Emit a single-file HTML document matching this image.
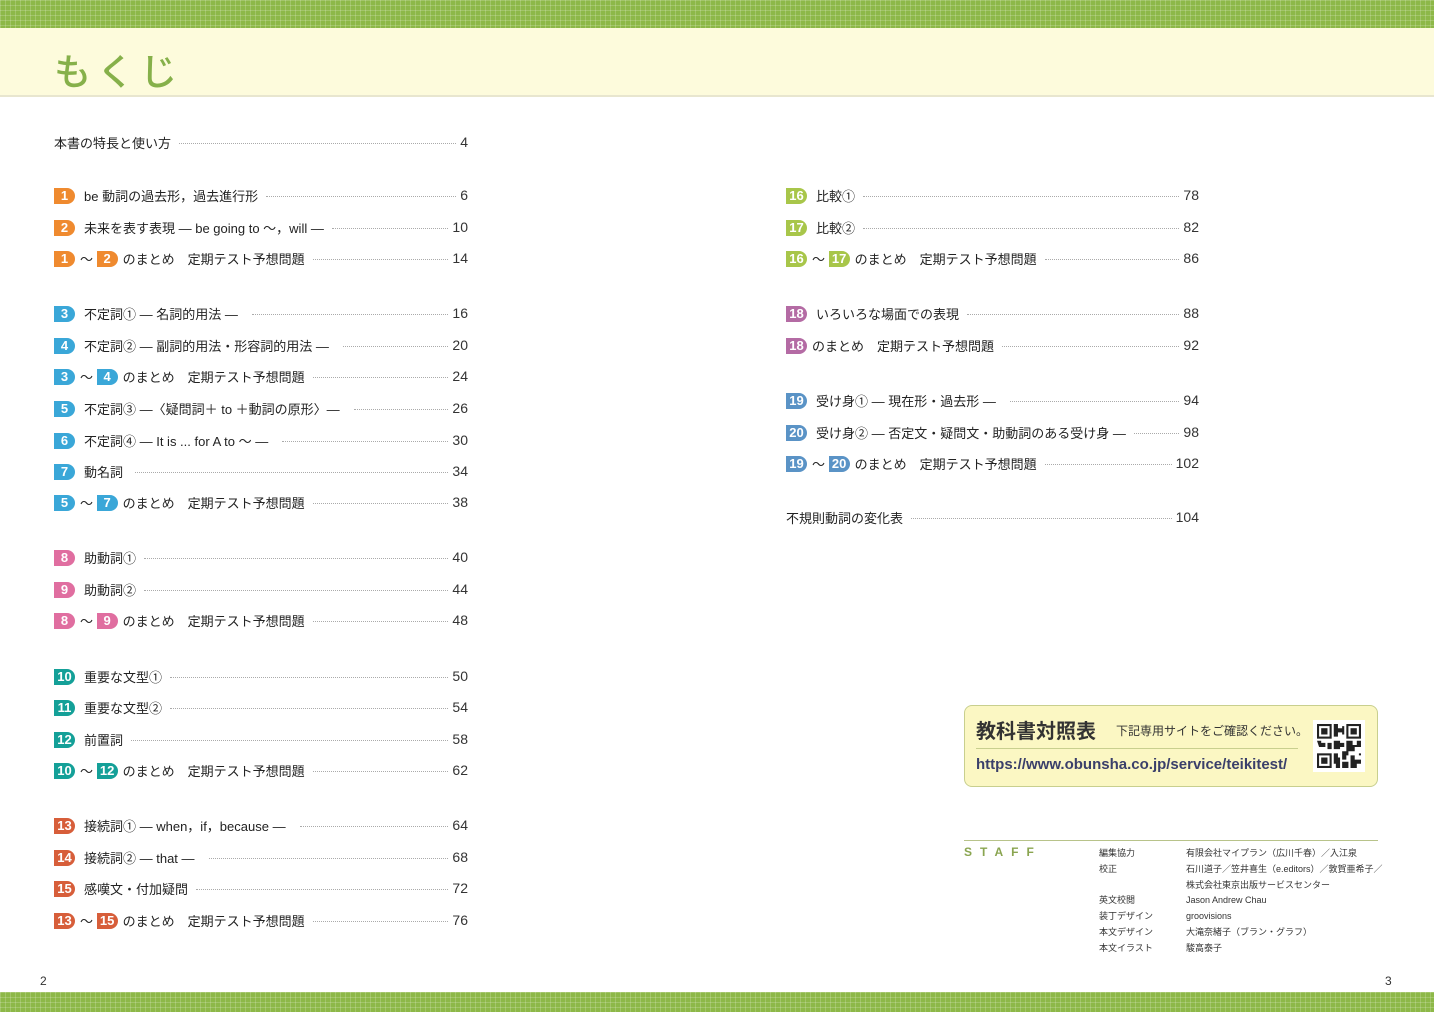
<!DOCTYPE html><html><head><meta charset="utf-8"><style>
body{margin:0;width:1434px;height:1012px;position:relative;background:#fff;font-family:"Liberation Sans","Noto Sans CJK JP",sans-serif;color:#222;overflow:hidden}
.band{position:absolute;left:0;width:1434px;background-color:#8db848;background-image:linear-gradient(rgba(255,255,255,.18) 1px,transparent 1px),linear-gradient(90deg,rgba(255,255,255,.18) 1px,transparent 1px);background-size:5px 5px}
.hdr{position:absolute;left:0;top:28px;width:1434px;height:67px;background:#fdfbdc;border-bottom:2px solid #e8e6cf}
.title{position:absolute;left:54px;top:42px;font-size:37px;color:#86b04a;letter-spacing:6px;font-weight:500}
.r{position:absolute;display:flex;align-items:center;height:20px;font-size:13px;white-space:nowrap}
.L{left:54px;width:414px}.R{left:786px;width:413px}
.b{display:inline-block;width:21px;height:16px;line-height:16px;text-align:center;color:#fff;font-weight:bold;font-size:13px;border-radius:0 8px 8px 0;margin-right:9px;font-family:"Liberation Sans",sans-serif;position:relative;top:1px}
.b2{margin-right:5px}
.d{flex:1;border-bottom:1.5px dotted #aaa;margin:0 4px 0 8px;height:0;position:relative;top:1px}
.n{font-size:14px;color:#333}
.o{background:#ef8a2f}.bl{background:#3aa7d8}.p{background:#e06ea0}.te{background:#14a098}.rd{background:#d75e3a}.li{background:#a8c64a}.pu{background:#b46ba4}.sb{background:#5a93c6}
.box{position:absolute;left:964px;top:705px;width:412px;height:80px;background:#fbf7c3;border:1.5px solid #c8cf8e;border-radius:8px}
.staff{position:absolute;font-size:9px;color:#333}
</style></head><body>
<div class="band" style="top:0;height:28px"></div>
<div class="hdr"></div>
<div class="title">もくじ</div>
<div class="band" style="top:992px;height:20px"></div>

<div class="r L" style="top:132px"><span>本書の特長と使い方</span><span class="d"></span><span class="n">4</span></div>
<div class="r L" style="top:185px"><span class="b o">1</span><span>be 動詞の過去形，過去進行形</span><span class="d"></span><span class="n">6</span></div>
<div class="r L" style="top:217px"><span class="b o">2</span><span>未来を表す表現 ― be going to ～，will ―</span><span class="d"></span><span class="n">10</span></div>
<div class="r L" style="top:248px"><span class="b o b2">1</span>～&nbsp;<span class="b o b2">2</span><span>のまとめ　定期テスト予想問題</span><span class="d"></span><span class="n">14</span></div>

<div class="r L" style="top:303px"><span class="b bl">3</span><span>不定詞① ― 名詞的用法 ―</span><span class="d" style="margin-left:14px"></span><span class="n">16</span></div>
<div class="r L" style="top:335px"><span class="b bl">4</span><span>不定詞② ― 副詞的用法・形容詞的用法 ―</span><span class="d" style="margin-left:14px"></span><span class="n">20</span></div>
<div class="r L" style="top:366px"><span class="b bl b2">3</span>～&nbsp;<span class="b bl b2">4</span><span>のまとめ　定期テスト予想問題</span><span class="d"></span><span class="n">24</span></div>
<div class="r L" style="top:398px"><span class="b bl">5</span><span>不定詞③ ―〈疑問詞＋ to ＋動詞の原形〉―</span><span class="d" style="margin-left:14px"></span><span class="n">26</span></div>
<div class="r L" style="top:430px"><span class="b bl">6</span><span>不定詞④ ― It is ... for A to ～ ―</span><span class="d" style="margin-left:14px"></span><span class="n">30</span></div>
<div class="r L" style="top:461px"><span class="b bl">7</span><span>動名詞</span><span class="d" style="margin-left:12px"></span><span class="n">34</span></div>
<div class="r L" style="top:492px"><span class="b bl b2">5</span>～&nbsp;<span class="b bl b2">7</span><span>のまとめ　定期テスト予想問題</span><span class="d"></span><span class="n">38</span></div>

<div class="r L" style="top:547px"><span class="b p">8</span><span>助動詞①</span><span class="d"></span><span class="n">40</span></div>
<div class="r L" style="top:579px"><span class="b p">9</span><span>助動詞②</span><span class="d"></span><span class="n">44</span></div>
<div class="r L" style="top:610px"><span class="b p b2">8</span>～&nbsp;<span class="b p b2">9</span><span>のまとめ　定期テスト予想問題</span><span class="d"></span><span class="n">48</span></div>

<div class="r L" style="top:666px"><span class="b te">10</span><span>重要な文型①</span><span class="d"></span><span class="n">50</span></div>
<div class="r L" style="top:697px"><span class="b te">11</span><span>重要な文型②</span><span class="d"></span><span class="n">54</span></div>
<div class="r L" style="top:729px"><span class="b te">12</span><span>前置詞</span><span class="d"></span><span class="n">58</span></div>
<div class="r L" style="top:760px"><span class="b te b2">10</span>～&nbsp;<span class="b te b2">12</span><span>のまとめ　定期テスト予想問題</span><span class="d"></span><span class="n">62</span></div>

<div class="r L" style="top:815px"><span class="b rd">13</span><span>接続詞① ― when，if，because ―</span><span class="d" style="margin-left:14px"></span><span class="n">64</span></div>
<div class="r L" style="top:847px"><span class="b rd">14</span><span>接続詞② ― that ―</span><span class="d" style="margin-left:14px"></span><span class="n">68</span></div>
<div class="r L" style="top:878px"><span class="b rd">15</span><span>感嘆文・付加疑問</span><span class="d"></span><span class="n">72</span></div>
<div class="r L" style="top:910px"><span class="b rd b2">13</span>～&nbsp;<span class="b rd b2">15</span><span>のまとめ　定期テスト予想問題</span><span class="d"></span><span class="n">76</span></div>

<div class="r R" style="top:185px"><span class="b li">16</span><span>比較①</span><span class="d"></span><span class="n">78</span></div>
<div class="r R" style="top:217px"><span class="b li">17</span><span>比較②</span><span class="d"></span><span class="n">82</span></div>
<div class="r R" style="top:248px"><span class="b li b2">16</span>～&nbsp;<span class="b li b2">17</span><span>のまとめ　定期テスト予想問題</span><span class="d"></span><span class="n">86</span></div>
<div class="r R" style="top:303px"><span class="b pu">18</span><span>いろいろな場面での表現</span><span class="d"></span><span class="n">88</span></div>
<div class="r R" style="top:335px"><span class="b pu b2">18</span><span>のまとめ　定期テスト予想問題</span><span class="d"></span><span class="n">92</span></div>
<div class="r R" style="top:390px"><span class="b sb">19</span><span>受け身① ― 現在形・過去形 ―</span><span class="d" style="margin-left:14px"></span><span class="n">94</span></div>
<div class="r R" style="top:422px"><span class="b sb">20</span><span>受け身② ― 否定文・疑問文・助動詞のある受け身 ―</span><span class="d"></span><span class="n">98</span></div>
<div class="r R" style="top:453px"><span class="b sb b2">19</span>～&nbsp;<span class="b sb b2">20</span><span>のまとめ　定期テスト予想問題</span><span class="d"></span><span class="n">102</span></div>
<div class="r R" style="top:507px"><span>不規則動詞の変化表</span><span class="d"></span><span class="n">104</span></div>

<div class="box">
<div style="position:absolute;left:11px;top:9px;font-size:20px;color:#333;font-weight:bold">教科書対照表</div>
<div style="position:absolute;left:151px;top:16px;font-size:12px;color:#333">下記専用サイトをご確認ください。</div>
<div style="position:absolute;left:11px;top:42px;width:322px;border-top:1px solid #c8cf8e"></div>
<div style="position:absolute;left:11px;top:50px;font-size:15px;font-weight:bold;color:#3a3f6a">https://www.obunsha.co.jp/service/teikitest/</div>
<div style="position:absolute;left:348px;top:14px;width:52px;height:52px;background:#fff"><svg width="44" height="44" viewBox="0 0 21 21" style="margin:4px"><g fill="none" stroke="#222"><rect x=".5" y=".5" width="6" height="6"/><rect x="14.5" y=".5" width="6" height="6"/><rect x=".5" y="14.5" width="6" height="6"/></g><g fill="#222"><rect x="2" y="2" width="3" height="3"/><rect x="16" y="2" width="3" height="3"/><rect x="2" y="16" width="3" height="3"/><path d="M8 0h2v2h2v2h-2v2h-2zM12 1h1v4h-1zM8 8h3v1h2v2h-2v1h-3zM0 8h2v1h2v2h-3zM5 9h2v3h-2zM14 8h3v2h2v-2h2v3h-3v2h-4zM8 14h2v2h1v3h-3zM12 13h3v2h-1v2h-2zM16 15h2v2h3v2h-2v2h-3zM12 18h3v3h-3zM20 14h1v1h-1zM9 19h2v2h-2zM6 10h1v1h-1z"/></g></svg></div>
</div>

<div style="position:absolute;left:964px;top:840px;width:414px;border-top:1.5px solid #b8c38a"></div>
<div style="position:absolute;left:964px;top:845px;font-size:12px;color:#8aa550;letter-spacing:8px;font-weight:bold">STAFF</div>
<div class="staff" style="left:1099px;top:846px;line-height:15.8px">編集協力<br>校正<br><br>英文校閲<br>装丁デザイン<br>本文デザイン<br>本文イラスト</div>
<div class="staff" style="left:1186px;top:846px;line-height:15.8px">有限会社マイプラン（広川千春）／入江泉<br>石川道子／笠井喜生（e.editors）／敦賀亜希子／<br>株式会社東京出版サービスセンター<br>Jason Andrew Chau<br>groovisions<br>大滝奈緒子（ブラン・グラフ）<br>駿高泰子</div>

<div style="position:absolute;left:40px;top:974px;font-size:12px;color:#333">2</div>
<div style="position:absolute;left:1385px;top:974px;font-size:12px;color:#333">3</div>
</body></html>
